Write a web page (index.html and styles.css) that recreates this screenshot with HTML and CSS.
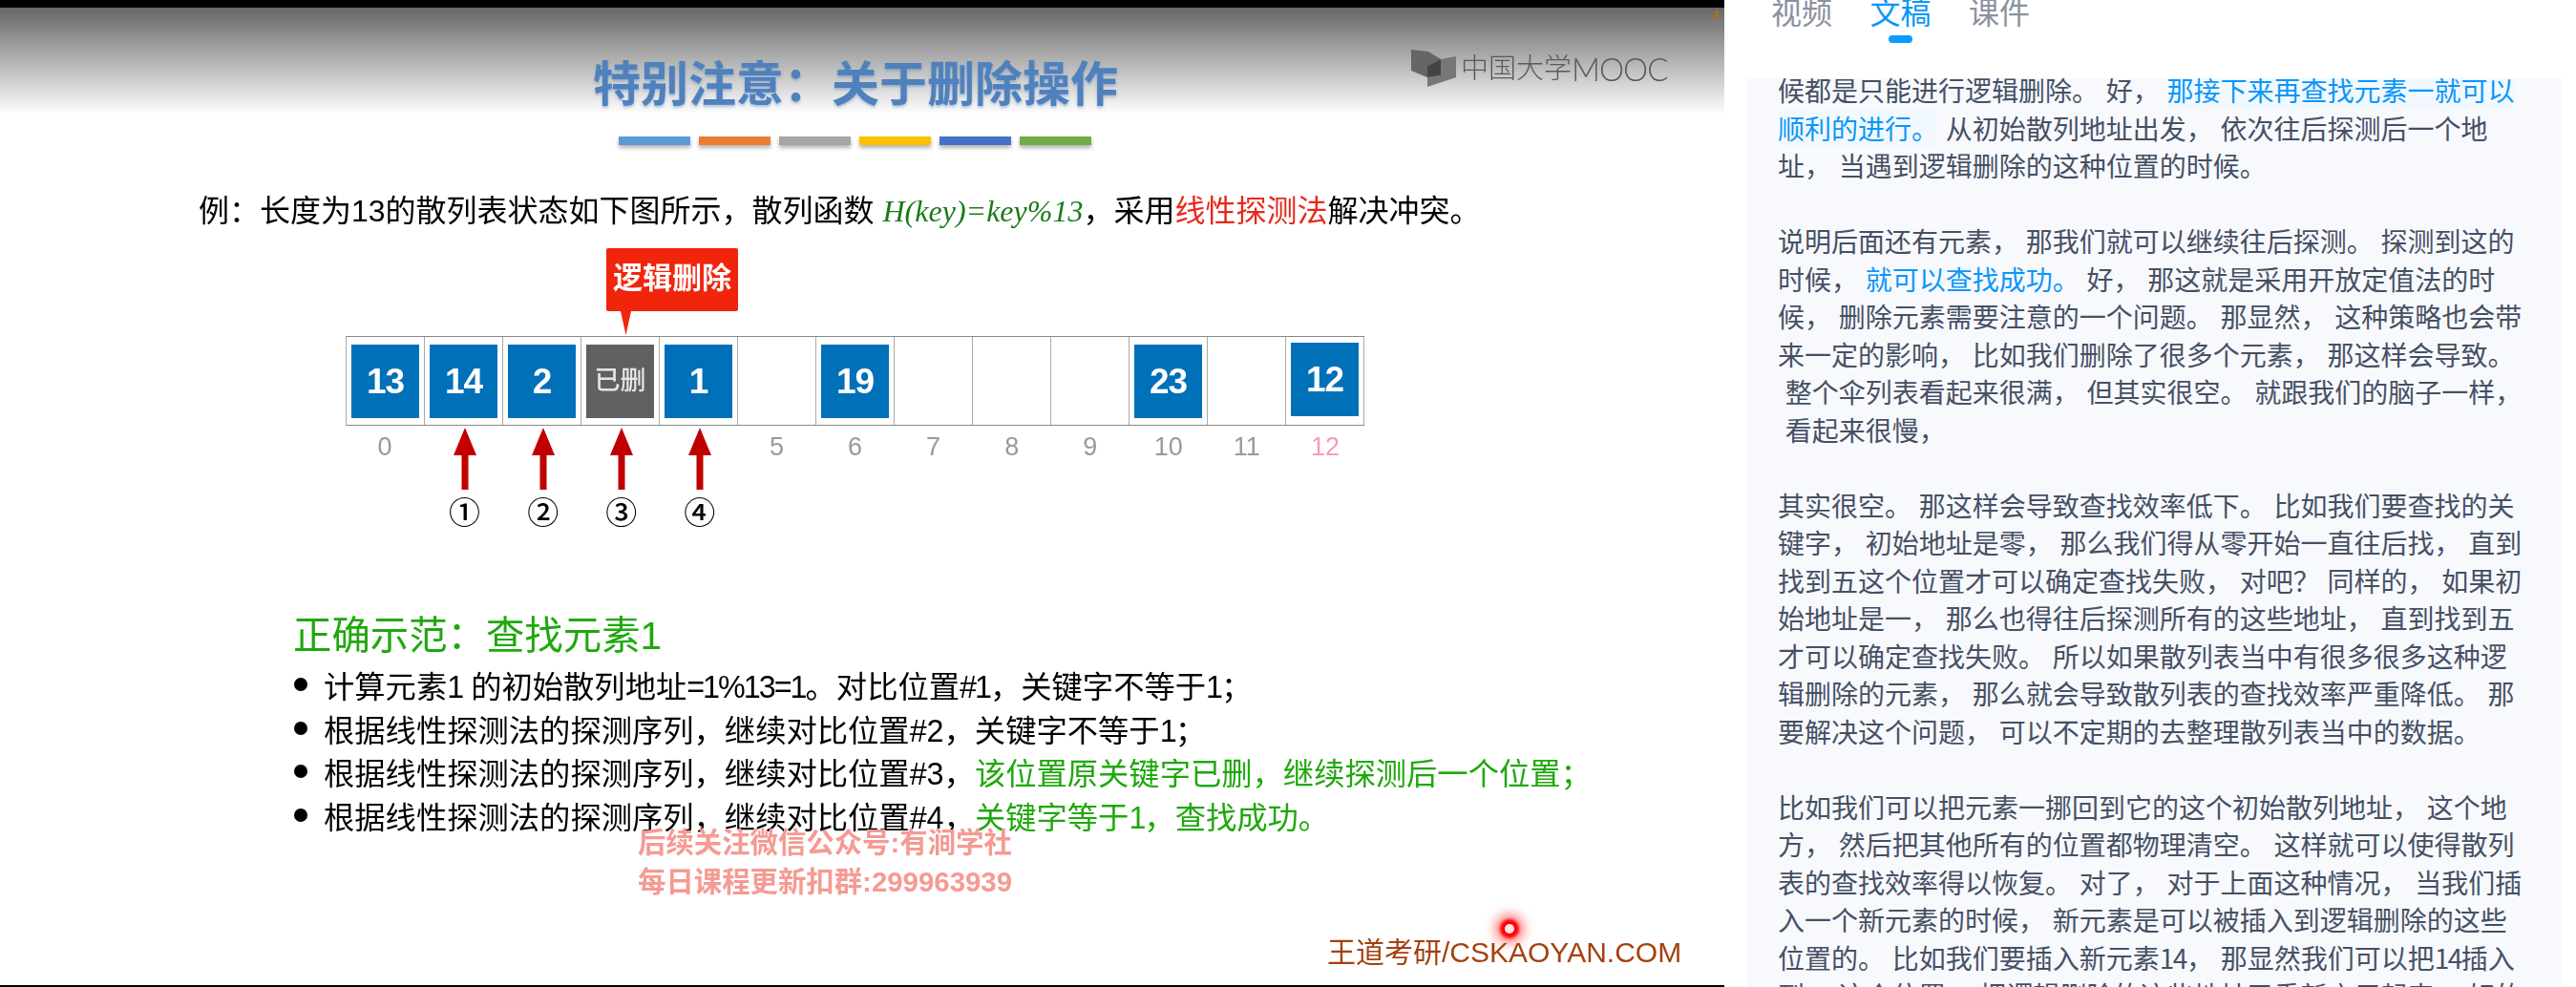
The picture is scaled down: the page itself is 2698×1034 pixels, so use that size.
FILE: index.html
```html
<!DOCTYPE html>
<html lang="zh-CN">
<head>
    <meta charset="UTF-8">
    <meta name="viewport" content="width=device-width, initial-scale=1.0">
    <title>特别注意：关于删除操作</title>
    <link rel="stylesheet" href="styles.css">
</head>
<body>
    <div class="page">
        <!-- Video frame -->
        <main class="slide">
            <div class="logo">
                <svg class="logo-mark" width="47" height="40" viewBox="0 0 47 40">
                    <polygon points="0,0 18,2 31,10 17,17 17,29 0,22" fill="#666"/>
                    <polygon points="31,10 47,7 47,29 17,39 17,29 31,27" fill="#777"/>
                    <polygon points="17,17 31,10 31,27 17,29" fill="#444"/>
                </svg>
                <span class="logo-cn">中国大学</span><span class="logo-en">MOOC</span>
            </div>
            <span class="blip"></span>

            <h1 class="title">特别注意：关于删除操作</h1>
            <div class="bars">
                <span class="bar bar-blue"></span>
                <span class="bar bar-orange"></span>
                <span class="bar bar-gray"></span>
                <span class="bar bar-yellow"></span>
                <span class="bar bar-indigo"></span>
                <span class="bar bar-green"></span>
            </div>

            <p class="example">例：长度为13的散列表状态如下图所示，散列函数 <em class="formula">H(key)=key%13</em>，采用<span class="red">线性探测法</span>解决冲突。</p>

            <div class="hash-table">
                <div class="callout">逻辑删除</div>
                <div class="cell"><span class="box">13</span></div>
                <div class="cell"><span class="box">14</span></div>
                <div class="cell"><span class="box">2</span></div>
                <div class="cell"><span class="box box-deleted">已删</span></div>
                <div class="cell"><span class="box">1</span></div>
                <div class="cell"></div>
                <div class="cell"><span class="box">19</span></div>
                <div class="cell"></div>
                <div class="cell"></div>
                <div class="cell"></div>
                <div class="cell"><span class="box">23</span></div>
                <div class="cell"></div>
                <div class="cell"><span class="box box-up">12</span></div>
            </div>

            <div class="under-table">
                <div class="index">0</div>
                <div class="probe">
                    <svg width="24" height="65" viewBox="0 0 24 65"><polygon points="12,0 24,29 15.5,29 15.5,65 8.5,65 8.5,29 0,29" fill="#c00000"/></svg>
                    <span class="step">①</span>
                </div>
                <div class="probe">
                    <svg width="24" height="65" viewBox="0 0 24 65"><polygon points="12,0 24,29 15.5,29 15.5,65 8.5,65 8.5,29 0,29" fill="#c00000"/></svg>
                    <span class="step">②</span>
                </div>
                <div class="probe">
                    <svg width="24" height="65" viewBox="0 0 24 65"><polygon points="12,0 24,29 15.5,29 15.5,65 8.5,65 8.5,29 0,29" fill="#c00000"/></svg>
                    <span class="step">③</span>
                </div>
                <div class="probe">
                    <svg width="24" height="65" viewBox="0 0 24 65"><polygon points="12,0 24,29 15.5,29 15.5,65 8.5,65 8.5,29 0,29" fill="#c00000"/></svg>
                    <span class="step">④</span>
                </div>
                <div class="index">5</div>
                <div class="index">6</div>
                <div class="index">7</div>
                <div class="index">8</div>
                <div class="index">9</div>
                <div class="index">10</div>
                <div class="index">11</div>
                <div class="index index-pink">12</div>
            </div>

            <h2 class="heading">正确示范：查找元素1</h2>
            <ul class="steps">
                <li><span>计算元素<span class="num">1</span> 的初始散列地址<span class="num">=1%13=1</span>。对比位置<span class="num">#1</span>，关键字不等于<span class="num">1</span>；</span></li>
                <li><span>根据线性探测法的探测序列，继续对比位置#2，关键字不等于<span class="num">1</span>；</span></li>
                <li><span>根据线性探测法的探测序列，继续对比位置#3，<span class="green">该位置原关键字已删，继续探测后一个位置；</span></span></li>
                <li><span>根据线性探测法的探测序列，继续对比位置#4，<span class="green">关键字等于<span class="num">1</span>，查找成功。</span></span></li>
            </ul>

            <div class="watermark">
                <div>后续关注微信公众号:有涧学社</div>
                <div>每日课程更新扣群:299963939</div>
            </div>
            <span class="laser"></span>
            <div class="credit">王道考研/CSKAOYAN.COM</div>
        </main>

        <!-- Side panel -->
        <aside class="side">
            <nav class="tabs">
                <a class="tab">视频</a>
                <a class="tab tab-active">文稿</a>
                <a class="tab">课件</a>
            </nav>
            <div class="transcript">
                <div class="transcript-inner">
<p>候都是只能进行逻辑删除。 好， <span class="hl">那接下来再查找元素一就可以
顺利的进行。</span> 从初始散列地址出发， 依次往后探测后一个地
址， 当遇到逻辑删除的这种位置的时候。</p>
<p>说明后面还有元素， 那我们就可以继续往后探测。 探测到这的
时候， <span class="blue">就可以查找成功。</span> 好， 那这就是采用开放定值法的时
候， 删除元素需要注意的一个问题。 那显然， 这种策略也会带
来一定的影响， 比如我们删除了很多个元素， 那这样会导致。
 整个伞列表看起来很满， 但其实很空。 就跟我们的脑子一样，
 看起来很慢，</p>
<p>其实很空。 那这样会导致查找效率低下。 比如我们要查找的关
键字， 初始地址是零， 那么我们得从零开始一直往后找， 直到
找到五这个位置才可以确定查找失败， 对吧？ 同样的， 如果初
始地址是一， 那么也得往后探测所有的这些地址， 直到找到五
才可以确定查找失败。 所以如果散列表当中有很多很多这种逻
辑删除的元素， 那么就会导致散列表的查找效率严重降低。 那
要解决这个问题， 可以不定期的去整理散列表当中的数据。</p>
<p>比如我们可以把元素一挪回到它的这个初始散列地址， 这个地
方， 然后把其他所有的位置都物理清空。 这样就可以使得散列
表的查找效率得以恢复。 对了， 对于上面这种情况， 当我们插
入一个新元素的时候， 新元素是可以被插入到逻辑删除的这些
位置的。 比如我们要插入新元素<span class="digits">14</span>， 那显然我们可以把<span class="digits">14</span>插入
到， 这个位置， 把逻辑删除的这些地址又重新启用起来。 好的</p>
                </div>
            </div>
        </aside>
    </div>
</body>
</html>
```

FILE: styles.css
```css
* {
    box-sizing: border-box;
}
html, body {
    margin: 0;
    height: 100%;
    background: #fff;
    overflow: hidden;
}
.page {
    display: flex;
    width: 2698px;
    height: 1034px;
    font-family: "Liberation Sans", "Noto Sans CJK SC", sans-serif;
}

/* video frame */
.slide {
    position: relative;
    flex: 0 0 1806px;
    height: 1034px;
    padding-top: 51px;
    border-top: 8px solid #000;
    border-bottom: 2px solid #000;
    background: linear-gradient(#666 0, #fff 112px) no-repeat #fff;
    color: #000;
    filter: blur(.5px);
}
.logo {
    position: absolute;
    left: 1478px;
    top: 44px;
    display: flex;
    align-items: flex-start;
    color: #5a5a5a;
}
.logo-mark {
    flex: none;
    margin-right: 5px;
}
.logo-cn {
    font-size: 29px;
    line-height: 40px;
    font-weight: 300;
}
.logo-en {
    font-family: Lato, "Liberation Sans", sans-serif;
    font-size: 33px;
    line-height: 40px;
    font-weight: 300;
    letter-spacing: -1px;
}
.blip {
    position: absolute;
    left: 1796px;
    top: 3px;
    width: 4px;
    height: 10px;
    border-radius: 2px;
    background: #a8701c;
}
.title {
    margin: 0;
    padding-right: 14px;
    font-size: 50px;
    line-height: 60px;
    font-weight: 700;
    text-align: center;
    color: #4f81bd;
    text-shadow: 0 2px 3px rgba(79, 129, 189, .45);
}
.bars {
    display: flex;
    gap: 9px;
    margin: 24px 0 0 648px;
}
.bar {
    width: 75px;
    height: 9px;
    box-shadow: 0 3px 4px rgba(0, 0, 0, .3);
}
.bar-blue { background: #5b9bd5; }
.bar-orange { background: #ed7d31; }
.bar-gray { background: #a5a5a5; }
.bar-yellow { background: #ffc000; }
.bar-indigo { background: #4472c4; }
.bar-green { background: #70ad47; }

.example {
    margin: 49px 0 0 208px;
    font-size: 32px;
    line-height: 40px;
}
.formula {
    font-family: "Liberation Serif", serif;
    font-size: 32px;
    color: #1a7a1a;
}
.red {
    color: #e8281a;
}

.hash-table {
    position: relative;
    display: grid;
    grid-template-columns: repeat(13, 1fr);
    width: 1067px;
    height: 94px;
    margin: 111px 0 0 362px;
    border-top: 1px solid #888;
    border-bottom: 1px solid #888;
    border-left: 1px solid #aaa;
}
.cell {
    padding-top: 8px;
    border-right: 1px solid #aaa;
    text-align: center;
}
.box {
    display: inline-block;
    width: 71px;
    height: 77px;
    font-size: 37px;
    font-weight: 700;
    line-height: 77px;
    letter-spacing: -1px;
    color: #fff;
    background: #0070b8;
}
.box-deleted {
    font-size: 27px;
    font-weight: 500;
    letter-spacing: 0;
    color: #e4e4e4;
    background: #606060;
}
.box-up {
    margin-top: -2px;
}
.callout {
    position: absolute;
    left: 272px;
    top: -93px;
    width: 138px;
    height: 66px;
    font-size: 31px;
    font-weight: 700;
    line-height: 64px;
    text-align: center;
    color: #fff;
    background: #f0250c;
    border-radius: 2px;
}
.callout::after {
    content: "";
    position: absolute;
    left: 15px;
    top: 66px;
    width: 11px;
    height: 25px;
    background: #f0250c;
    clip-path: polygon(0 0, 100% 0, 50% 100%);
}

.under-table {
    display: grid;
    grid-template-columns: repeat(13, 1fr);
    width: 1067px;
    margin-left: 362px;
}
.index {
    padding-top: 7px;
    font-size: 27px;
    line-height: 30px;
    text-align: center;
    color: #999;
}
.index-pink {
    color: #f49ac1;
}
.probe {
    display: flex;
    flex-direction: column;
    align-items: center;
    padding: 2px 0 0 3px;
}
.step {
    margin-top: 10px;
    font-size: 33px;
    font-weight: 500;
    line-height: 30px;
}

.heading {
    margin: 88px 0 0 307px;
    font-size: 40.4px;
    line-height: 50px;
    font-weight: 400;
    color: #1fa80c;
}
.steps {
    margin: 3px 0 0 308px;
    padding: 0;
    list-style: none;
    font-size: 32.3px;
}
.steps li {
    display: flex;
    align-items: center;
    height: 45.7px;
    white-space: pre;
}
.steps li::before {
    content: "";
    flex: none;
    width: 14px;
    height: 14px;
    margin-right: 17px;
    border-radius: 50%;
    background: #000;
}
.num {
    letter-spacing: -2px;
}
.green {
    color: #1fa80c;
}
.watermark {
    position: absolute;
    left: 668px;
    top: 854px;
    font-size: 29.4px;
    font-weight: 700;
    line-height: 41px;
    white-space: nowrap;
    color: #f59a94;
}
.laser {
    position: absolute;
    left: 1576px;
    top: 960px;
    width: 10px;
    height: 10px;
    border-radius: 50%;
    background: #ffe6e6;
    box-shadow: 0 0 3px 5px #f00, 0 0 12px 10px rgba(255, 0, 0, .5);
}
.credit {
    position: absolute;
    left: 1390px;
    top: 970px;
    font-size: 30px;
    line-height: 40px;
    white-space: nowrap;
    color: #a5400f;
}

/* side panel */
.side {
    flex: 1;
    display: flex;
    flex-direction: column;
    height: 1034px;
    padding: 0 16px 0 24px;
    background: #fff;
    font-family: "Noto Sans CJK SC", sans-serif;
}
.tabs {
    flex: 0 0 82px;
    display: flex;
    gap: 39.5px;
    padding-left: 25px;
}
.tab {
    display: flex;
    flex-direction: column;
    align-items: center;
    margin-top: -11px;
    font-size: 32px;
    line-height: 44px;
    color: #8a919f;
}
.tab-active {
    color: #0a96fa;
}
.tab-active::after {
    content: "";
    width: 25px;
    height: 8px;
    margin-top: 4px;
    border-radius: 4px;
    background: #0a9bff;
}
.transcript {
    flex: 1;
    overflow: hidden;
    background: #f7f9fd;
}
.transcript-inner {
    margin-top: -7px;
    padding-left: 32px;
    font-size: 28px;
    line-height: 39.5px;
    word-spacing: 1.5px;
    color: #465064;
}
.transcript p {
    margin: 0 0 39.5px;
    white-space: pre;
}
.digits {
    letter-spacing: -1.5px;
}
.hl {
    color: #0a96fa;
    background: #f2f9fe;
}
.blue {
    color: #0a96fa;
}
```
